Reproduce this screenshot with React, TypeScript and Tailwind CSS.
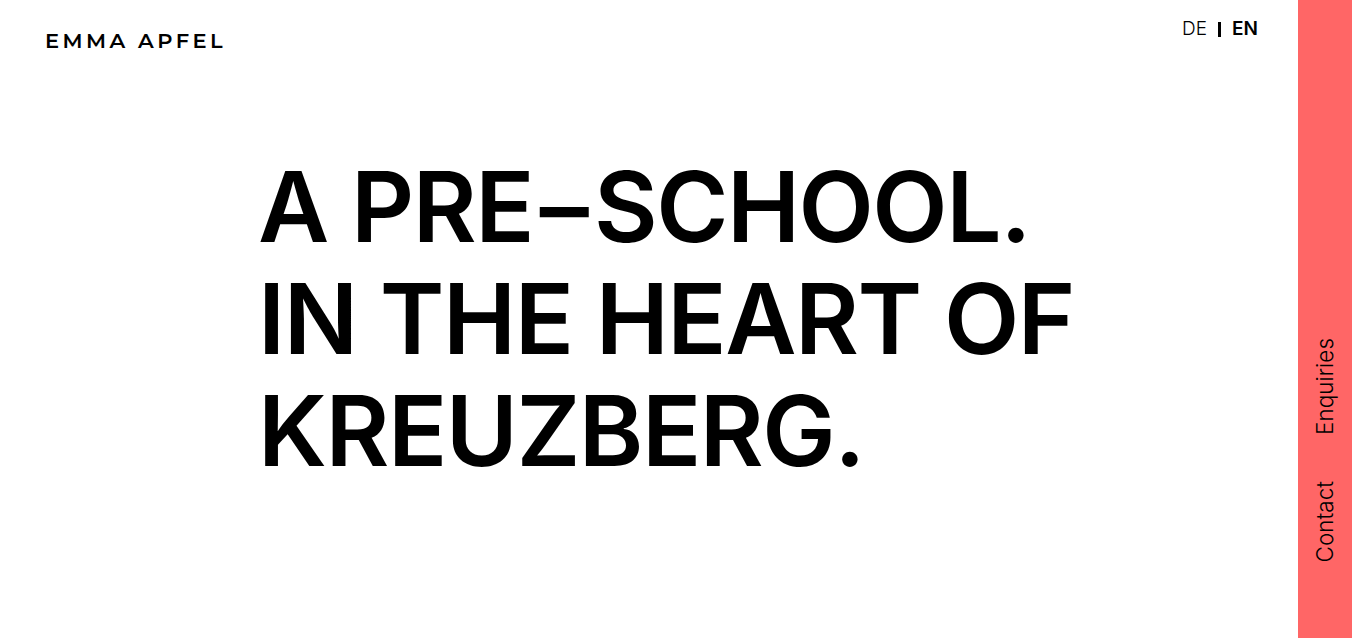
import type { ReactElement } from 'react';

export default function App(): ReactElement {
  return (
    <div className="flex h-[638px] w-full overflow-hidden bg-white text-black">
      <main className="flex min-w-0 flex-1 flex-col">
        <header className="flex items-start justify-between pl-[45px] pr-[40px] pt-[18px]">
          <a
            href="#"
            className="mt-[12px] font-['Montserrat','Lato',sans-serif] text-[21px] font-semibold uppercase leading-none tracking-[0.165em]"
          >
            Emma Apfel
          </a>
          <nav className="flex items-center gap-[11px] font-['Inter',sans-serif] text-[19px] leading-[22px]">
            <span className="font-light">DE</span>
            <span className="h-[15px] w-[3px] bg-black" />
            <span className="font-semibold">EN</span>
          </nav>
        </header>

        <h1 className="ml-[258px] mt-[100px] font-['Inter',sans-serif] text-[98px] font-semibold uppercase leading-[112px] tracking-[-0.015em]">
          A pre&#8202;&#8211;&#8202;school.
          <br />
          In the heart of
          <br />
          Kreuzberg.
        </h1>
      </main>

      <aside className="flex w-[54px] shrink-0 flex-col items-center justify-end gap-[46px] bg-[#ff6666] pb-[76px] font-['Inter',sans-serif] text-[22.5px] font-light leading-none text-black">
        <a href="#" className="[writing-mode:vertical-rl] rotate-180">
          Enquiries
        </a>
        <a href="#" className="[writing-mode:vertical-rl] rotate-180">
          Contact
        </a>
      </aside>
    </div>
  );
}
